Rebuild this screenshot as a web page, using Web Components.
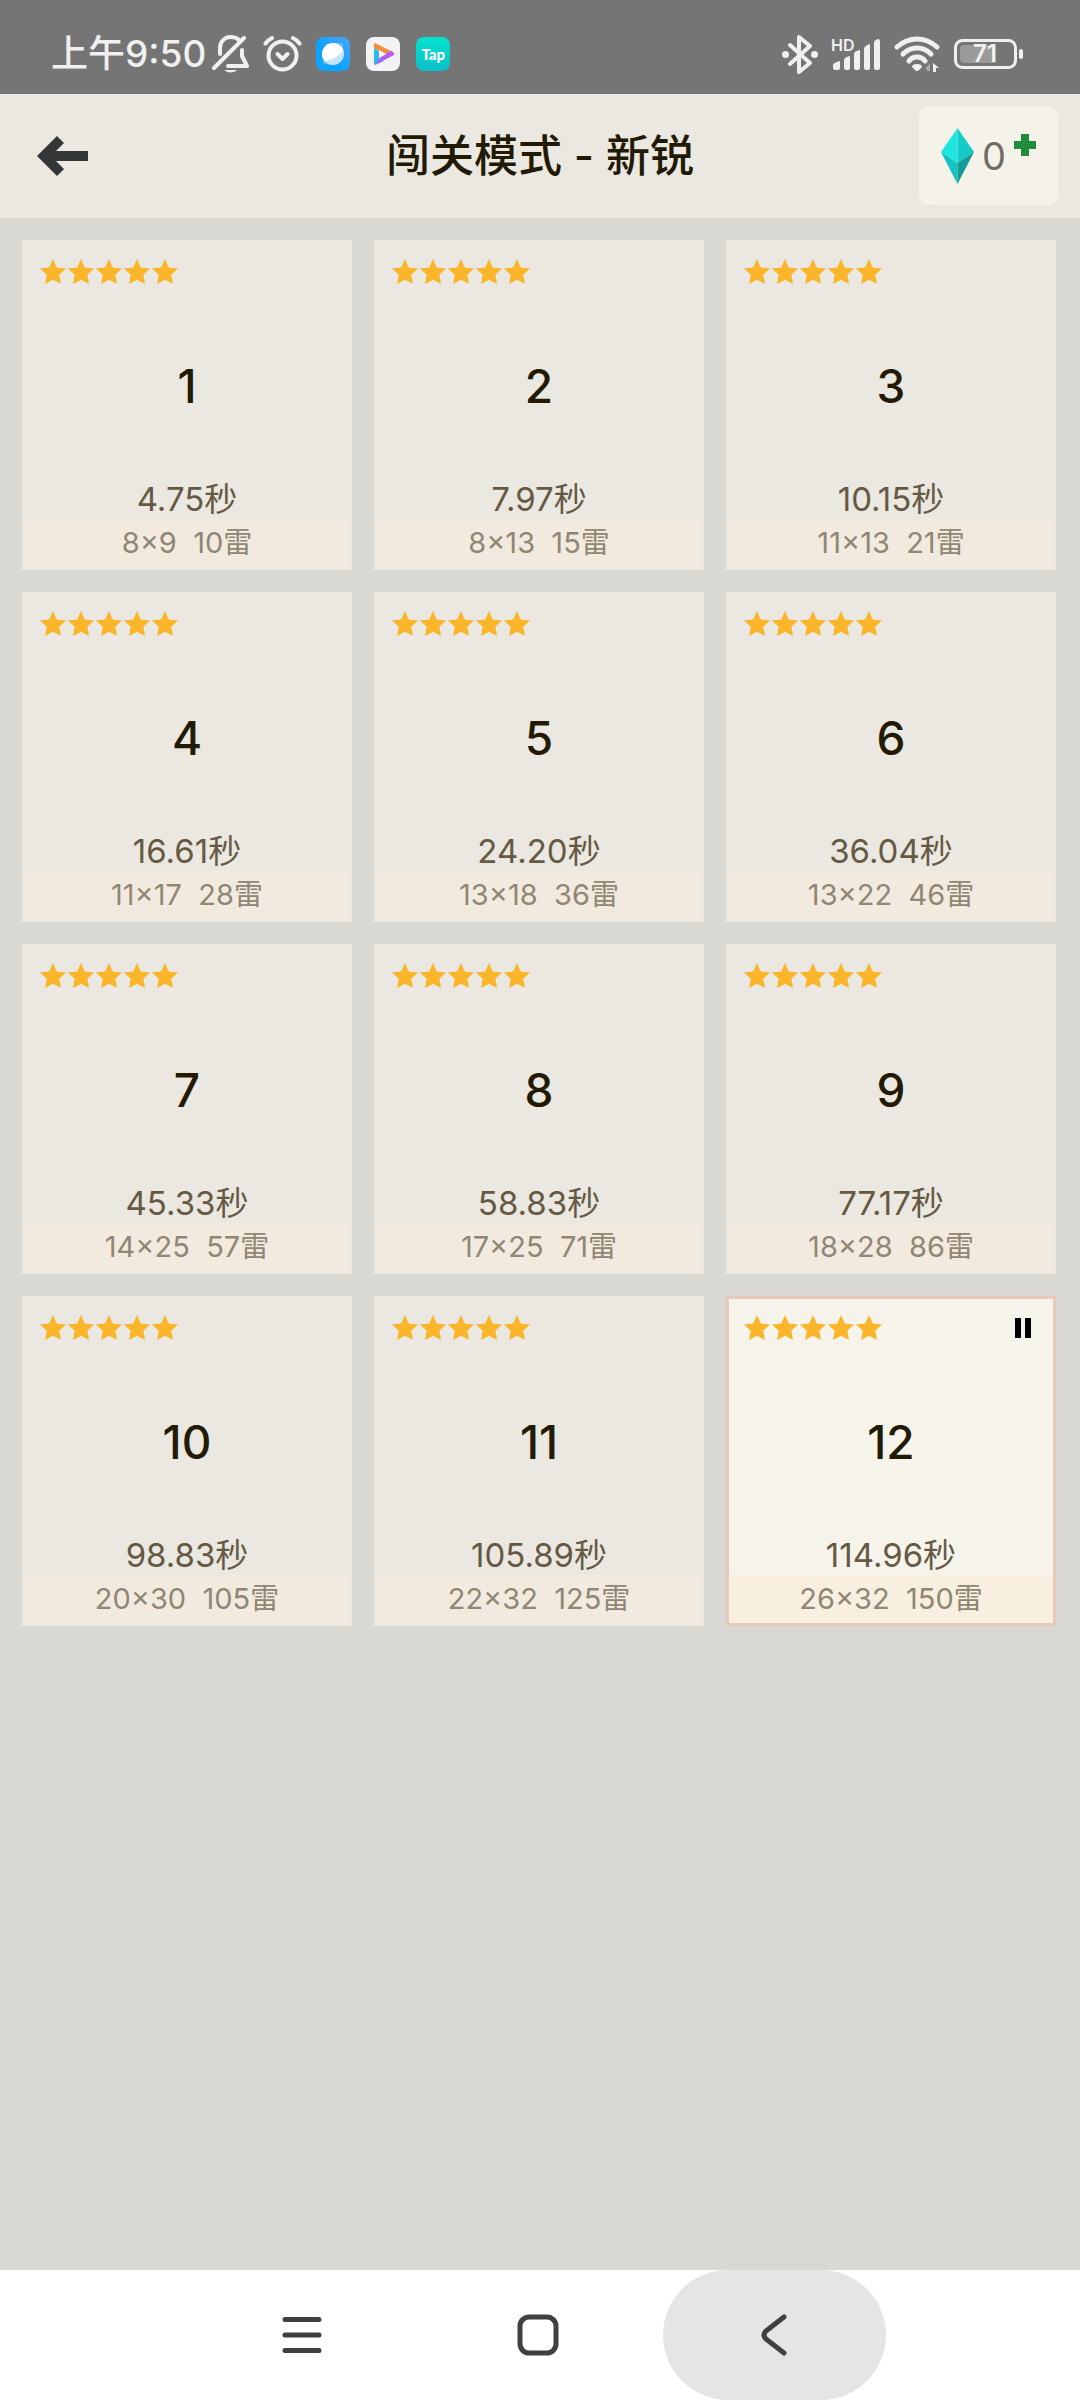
<!DOCTYPE html>
<html lang="zh-CN">
<head>
<meta charset="utf-8">
<meta name="viewport" content="width=device-width, initial-scale=1">
<title>闯关模式 - 新锐</title>
<style>
  body {
    margin: 0;
    font-family: Inter, "Noto Sans CJK SC", sans-serif;
    color: #231a06;
    background: #d9d8d3;
  }
</style>
</head>
<body>
<game-screen>
  <status-bar slot="status" time="上午9:50" battery="71"></status-bar>
  <game-header slot="header" gems="0">闯关模式 - 新锐</game-header>
  <level-grid></level-grid>
  <nav-bar slot="nav"></nav-bar>
</game-screen>

<script>
class GameScreen extends HTMLElement {
  constructor() {
    super();
    this.attachShadow({ mode: 'open' });
    this.shadowRoot.innerHTML = `
    <style>
      :host {
        display: flex;
        flex-direction: column;
        min-height: 100vh;
      }
      main {
        flex: 1;
      }
    </style>
    <slot name="status"></slot>
    <slot name="header"></slot>
    <main><slot></slot></main>
    <slot name="nav"></slot>
    `;
  }
}
customElements.define('game-screen', GameScreen);

class StatusBar extends HTMLElement {
  constructor() {
    super();
    this.attachShadow({ mode: 'open' });
    this.shadowRoot.innerHTML = `
    <style>
      :host {
        display: flex;
        justify-content: space-between;
        align-items: center;
        box-sizing: border-box;
        height: 94px;
        padding: 14px 57px 0 51px;
        background: #757575;
        color: #f0f0f0;
      }
      .side {
        display: flex;
        align-items: center;
      }
      .left {
        gap: 14px;
      }
      .right {
        gap: 13px;
      }
      .time {
        display: flex;
        align-items: center;
        gap: 6px;
        font-size: 37px;
        line-height: 40px;
        font-weight: 500;
      }
      svg {
        display: block;
        flex: none;
      }
      .apps {
        display: flex;
        gap: 16px;
      }
      .tap {
        display: flex;
        align-items: center;
        justify-content: center;
        width: 34px;
        height: 34px;
        border-radius: 8px;
        background: linear-gradient(#04e2cf, #0cbfc9);
        color: #fff;
        font: 900 15px/20px Lato, sans-serif;
      }
      .signal {
        display: grid;
      }
      .signal > * {
        grid-area: 1 / 1;
      }
      .signal span {
        font-size: 16px;
        line-height: 16px;
        font-weight: 600;
      }
      .battery {
        display: grid;
        align-items: center;
      }
      .battery > * {
        grid-area: 1 / 1;
      }
      .battery span {
        padding-right: 7px;
        text-align: center;
        font-size: 24px;
        line-height: 30px;
        font-weight: 600;
      }
    </style>
    <div class="side left">
      <div class="time">
        <span id="time"></span>
        <svg width="37" height="38" viewBox="0 0 37 38" fill="none" stroke="#f0f0f0" stroke-width="4" stroke-linecap="round" stroke-linejoin="round">
          <path d="M8 19V13C8 6 13 2 19 2C22 2 25 3 27 5"/>
          <path d="M2 33L32 3"/>
          <path d="M30 15V21L35 31H16"/>
          <path d="M12 35H25Q19 40 12 35Z" fill="#f0f0f0" stroke="none"/>
        </svg>
      </div>
      <svg width="39" height="38" viewBox="0 0 39 38" fill="none" stroke="#f0f0f0" stroke-width="4" stroke-linecap="round" stroke-linejoin="round">
        <circle cx="19.500" cy="20.500" r="14"/>
        <path d="M14.500 19L19.500 24L24.500 19"/>
        <path d="M2.500 8.500Q5 5 9 3M36.500 8.500Q34 5 30 3"/>
      </svg>
      <div class="apps">
        <svg width="34" height="34" viewBox="0 0 34 34">
          <defs>
            <linearGradient id="blue" x1="1" y1="0" x2="0" y2="1">
              <stop offset="0" stop-color="#4aa5fb"/>
              <stop offset=".6" stop-color="#0aa2ff"/>
              <stop offset="1" stop-color="#13a6ff"/>
            </linearGradient>
          </defs>
          <rect width="34" height="34" rx="8" fill="url(#blue)"/>
          <path d="M7 27V18L18 6H27V16Q25 28 17 28Z" fill="#8fd0ff" opacity=".5"/>
          <circle cx="17" cy="17" r="11" fill="#c5e5ff"/>
          <path d="M9 24.500A11 11 0 1 1 27.500 13.500Q20 22 9 24.500Z" fill="#fff"/>
        </svg>
        <svg width="34" height="34" viewBox="0 0 34 34">
          <rect width="34" height="34" rx="8" fill="#f3f3f5"/>
          <path d="M8 11L13 14V22L18 24L9 28Q8 28 8 26Z" fill="#2bb8ee"/>
          <path d="M9 6Q8 6 8 8V11L21 18L27 15Z" fill="#f58f35"/>
          <path d="M9 28L28 18Q29 17 27 15L25 14L14 20L13 22Z" fill="#b45cf5"/>
          <path d="M13 13V21L20 17Z" fill="#fff"/>
        </svg>
        <span class="tap">Tap</span>
      </div>
    </div>
    <div class="side right">
      <svg width="36" height="39" viewBox="0 0 36 39" fill="none" stroke="#f0f0f0" stroke-width="4" stroke-linecap="round" stroke-linejoin="round">
        <path d="M8 10L28 28L17 37V2L28 11L8 29"/>
        <circle cx="3.500" cy="19.500" r="3.500" fill="#f0f0f0" stroke="none"/>
        <circle cx="32.500" cy="19.500" r="3.500" fill="#f0f0f0" stroke="none"/>
      </svg>
      <div class="signal">
        <span>HD</span>
        <svg width="50" height="34" viewBox="0 0 50 34" fill="#f0f0f0">
          <path d="M2 28Q2 26 9 24V31Q9 33 7 33H4Q2 33 2 31Z"/>
          <path d="M13 23Q13 20 19 19V31Q19 33 17 33H15Q13 33 13 31Z"/>
          <path d="M23 17Q23 14 29 13V31Q29 33 27 33H25Q23 33 23 31Z"/>
          <path d="M33 12Q33 9 39 7V31Q39 33 37 33H35Q33 33 33 31Z"/>
          <path d="M43 6Q43 3 47 2Q49 2 49 4V31Q49 33 47 33H45Q43 33 43 31Z"/>
        </svg>
      </div>
      <svg width="47" height="36" viewBox="0 0 47 36" fill="none" stroke="#f0f0f0" stroke-width="5" stroke-linecap="round">
        <path d="M3 11Q12 3 23 3T43 11"/>
        <path d="M9 18Q15 12 23 12T37 18"/>
        <path d="M15 25Q18 21 23 21T31 25"/>
        <path d="M18 31Q18 28 23 28T28 31L25 34Q23 36 21 34Z" fill="#f0f0f0" stroke="none"/>
        <path d="M36 35V27L31 33H33V35Z" fill="#aaa" stroke="none"/>
        <path d="M39 36V27L45 32H42V36Z" fill="#f0f0f0" stroke="none"/>
      </svg>
      <div class="battery">
        <svg width="69" height="30" viewBox="0 0 69 30">
          <rect x="1.500" y="1.500" width="60" height="27" rx="7" fill="none" stroke="#f0f0f0" stroke-width="3"/>
          <path d="M11 6H42V24H11Q6 24 6 20V10Q6 6 11 6Z" fill="#9a9a9a"/>
          <rect x="65" y="10" width="4" height="10" rx="2" fill="#f0f0f0"/>
        </svg>
        <span id="battery"></span>
      </div>
    </div>
    `;
  }

  connectedCallback() {
    this.shadowRoot.getElementById('time').textContent = this.getAttribute('time');
    this.shadowRoot.getElementById('battery').textContent = this.getAttribute('battery');
  }
}
customElements.define('status-bar', StatusBar);

class GameHeader extends HTMLElement {
  constructor() {
    super();
    this.attachShadow({ mode: 'open' });
    this.shadowRoot.innerHTML = `
    <style>
      :host {
        display: grid;
        grid-template-columns: 1fr auto 1fr;
        align-items: center;
        box-sizing: border-box;
        height: 124px;
        padding: 0 22px 1px;
        background: #eae8e1;
      }
      button {
        border: 0;
        margin: 0;
        font: inherit;
        cursor: pointer;
      }
      svg {
        display: block;
      }
      .back {
        justify-self: start;
        padding: 15px;
        background: none;
      }
      h1 {
        margin: 0;
        font-size: 44px;
        line-height: 56px;
        font-weight: 500;
      }
      .gems {
        display: flex;
        align-items: center;
        justify-self: end;
        gap: 8px;
        height: 99px;
        padding: 0 22px;
        border-radius: 10px;
        background: #f4f2e9;
        color: #706d65;
        font-size: 38px;
        line-height: 48px;
        font-weight: 400;
      }
      .plus {
        align-self: flex-start;
        padding-top: 28px;
      }
    </style>
    <button class="back" aria-label="返回">
      <svg width="51" height="40" viewBox="0 0 51 40" fill="#333738">
        <path d="M0 20L20 0L27 7L19 15H51V25H19L27 33L20 40Z"/>
      </svg>
    </button>
    <h1><slot></slot></h1>
    <button class="gems">
      <svg width="33" height="56" viewBox="0 0 33 56">
        <path d="M16.500 0L0 24L16.500 35Z" fill="#1ee6dc"/>
        <path d="M16.500 0L33 24L16.500 35Z" fill="#16cac9"/>
        <path d="M0 24L16.500 35V56Z" fill="#12c3c2"/>
        <path d="M33 24L16.500 35V56Z" fill="#149b98"/>
      </svg>
      <span id="count"></span>
      <svg class="plus" width="22" height="22" viewBox="0 0 22 22" fill="#1f8b3c">
        <path d="M7 0H15V7H22V15H15V22H7V15H0V7H7Z"/>
      </svg>
    </button>
    `;
  }

  connectedCallback() {
    this.shadowRoot.getElementById('count').textContent = this.getAttribute('gems');
  }
}
customElements.define('game-header', GameHeader);

class StarRow extends HTMLElement {
  constructor() {
    super();
    this.attachShadow({ mode: 'open' });
    const star = `
      <svg width="26" height="25" viewBox="0 0 26 25" fill="#fab52b">
        <path d="M13 0L16.800 8.400L26 9.600L19.300 15.800L21 25L13 20.800L5 25L6.700 15.800L0 9.600L9.200 8.400Z"/>
      </svg>`;
    this.shadowRoot.innerHTML = `
    <style>
      :host {
        display: flex;
        gap: 2px;
      }
      svg {
        display: block;
      }
    </style>
    ${star.repeat(5)}
    `;
  }
}
customElements.define('star-row', StarRow);

class LevelCard extends HTMLElement {
  constructor() {
    super();
    this.attachShadow({ mode: 'open' });
    this.shadowRoot.innerHTML = `
    <style>
      :host {
        display: block;
      }
      button {
        display: flex;
        flex-direction: column;
        box-sizing: border-box;
        width: 100%;
        aspect-ratio: 1;
        margin: 0;
        padding: 0;
        border: 3px solid #ebe8e1;
        background: #eae8e0;
        font: inherit;
        color: inherit;
        text-align: center;
        cursor: pointer;
      }
      :host([current]) button {
        border-color: #e9c8bc;
        background: #f6f4ea;
      }
      .top {
        display: flex;
        justify-content: space-between;
        align-items: center;
        align-self: stretch;
        height: 25px;
        padding: 16px 22px 8px 15px;
      }
      .pause {
        display: none;
      }
      :host([current]) .pause {
        display: block;
      }
      .number {
        display: flex;
        flex: 1;
        align-items: center;
        justify-content: center;
        align-self: stretch;
        font-size: 46px;
        font-weight: 500;
      }
      .time {
        align-self: stretch;
        font-size: 33px;
        line-height: 40px;
        color: #665943;
      }
      .size {
        align-self: stretch;
        font-size: 29px;
        line-height: 48px;
        white-space: pre;
        color: #8f8674;
        background: #f3eadf;
      }
      :host([current]) .size {
        background: #f8efe1;
      }
    </style>
    <button>
      <span class="top">
        <star-row></star-row>
        <svg class="pause" width="16" height="20" viewBox="0 0 16 20">
          <path d="M0 0H6V20H0ZM10 0H16V20H10Z"/>
        </svg>
      </span>
      <span class="number"></span>
      <span class="time"></span>
      <span class="size"></span>
    </button>
    `;
  }

  connectedCallback() {
    const root = this.shadowRoot;
    root.querySelector('.number').textContent = this.getAttribute('level');
    root.querySelector('.time').textContent = this.getAttribute('time') + '秒';
    root.querySelector('.size').textContent = this.getAttribute('size') + '  ' + this.getAttribute('mines') + '雷';
  }
}
customElements.define('level-card', LevelCard);

// best time, board size, mines
const LEVELS = [
  ['4.75', '8×9', 10],
  ['7.97', '8×13', 15],
  ['10.15', '11×13', 21],
  ['16.61', '11×17', 28],
  ['24.20', '13×18', 36],
  ['36.04', '13×22', 46],
  ['45.33', '14×25', 57],
  ['58.83', '17×25', 71],
  ['77.17', '18×28', 86],
  ['98.83', '20×30', 105],
  ['105.89', '22×32', 125],
  ['114.96', '26×32', 150],
];

class LevelGrid extends HTMLElement {
  constructor() {
    super();
    this.attachShadow({ mode: 'open' });
    const cards = LEVELS.map(([time, size, mines], i) => {
      const current = i === LEVELS.length - 1 ? 'current' : '';
      return `<level-card level="${i + 1}" time="${time}" size="${size}" mines="${mines}" ${current}></level-card>`;
    });
    this.shadowRoot.innerHTML = `
    <style>
      :host {
        display: grid;
        grid-template-columns: repeat(3, 1fr);
        gap: 22px;
        padding: 22px 24px 22px 22px;
      }
    </style>
    ${cards.join('')}
    `;
  }
}
customElements.define('level-grid', LevelGrid);

class NavBar extends HTMLElement {
  constructor() {
    super();
    this.attachShadow({ mode: 'open' });
    this.shadowRoot.innerHTML = `
    <style>
      :host {
        display: block;
        background: #fff;
      }
      nav {
        display: flex;
        justify-content: center;
        gap: 13px;
        padding-right: 4px;
      }
      button {
        display: flex;
        align-items: center;
        justify-content: center;
        width: 223px;
        height: 130px;
        padding: 0;
        border: 0;
        border-radius: 65px;
        background: none;
      }
      .pressed {
        background: #e5e5e5;
      }
      svg {
        fill: none;
        stroke: #404040;
        stroke-width: 5;
        stroke-linecap: round;
        stroke-linejoin: round;
      }
    </style>
    <nav>
      <button aria-label="最近任务">
        <svg width="40" height="42" viewBox="0 0 40 42"><path d="M3 5.500H37M3 21H37M3 36.500H37"/></svg>
      </button>
      <button aria-label="主屏幕">
        <svg width="42" height="42" viewBox="0 0 42 42"><rect x="3" y="3" width="36" height="36" rx="9"/></svg>
      </button>
      <button class="pressed" aria-label="返回">
        <svg width="26" height="42" viewBox="0 0 26 42"><path d="M23 3L5 17Q1 21 5 25L23 39"/></svg>
      </button>
    </nav>
    `;
  }
}
customElements.define('nav-bar', NavBar);
</script>
</body>
</html>
